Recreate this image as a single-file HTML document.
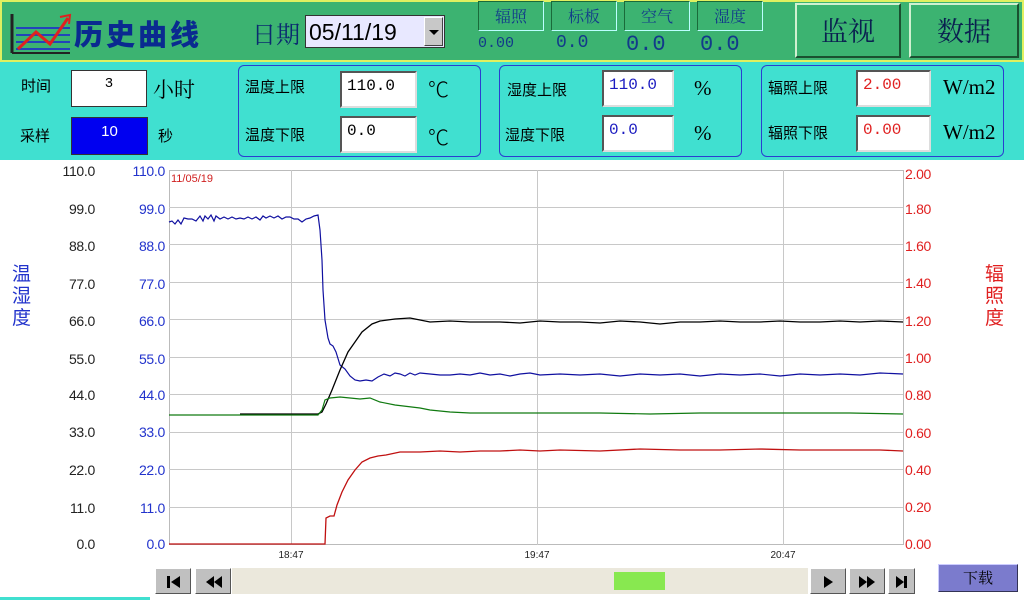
<!DOCTYPE html>
<html><head><meta charset="utf-8"><style>
*{margin:0;padding:0;box-sizing:border-box}
body{width:1024px;height:600px;overflow:hidden;background:#fff;font-family:"Liberation Sans","Noto Sans CJK SC",sans-serif;position:relative}
.a{position:absolute}
.cj{font-family:"Noto Sans CJK SC","WenQuanYi Zen Hei",sans-serif}
.sf{font-family:"Noto Serif CJK SC","Liberation Serif",serif}
.top{left:0;top:0;width:1024px;height:62px;background:#3cb371;border:2px solid #e0f060}
.band{left:0;top:62px;width:1024px;height:98px;background:#40e0d0}
.inp{background:#fff;border:2px solid;border-color:#555 #ddd #ddd #555;font-family:"Liberation Mono","Noto Sans CJK SC",monospace;font-size:16px;padding-left:5px;line-height:26px}
.grp{border:1.5px solid #2a3fd0;border-radius:6px}
.tab{border:1px solid;border-color:#1a6a3a #bff #bff #1a6a3a;width:66px;height:30px;text-align:center;font-size:16px;color:#123a8a;line-height:28px}
.bt{border:2px solid;border-color:#d0f0d0 #1a5030 #1a5030 #d0f0d0;background:#3cb371;font-size:27px;color:#0a2050;text-align:center;line-height:50px}
.sb{background:#c0c0c0;border:1px solid;border-color:#fff #555 #555 #fff;width:36px;height:26px;top:568px}
.deg{font-size:21px;font-family:"Noto Sans CJK SC",sans-serif;font-weight:300}
</style></head><body>
<div class="a top"></div>
<svg class="a" style="left:10px;top:12px" width="62" height="42"><line x1="2" y1="2" x2="2" y2="41" stroke="#222" stroke-width="3"/><g stroke="#2244bb" stroke-width="2"><line x1="6" y1="16" x2="60" y2="16"/><line x1="6" y1="23" x2="60" y2="23"/><line x1="6" y1="30" x2="60" y2="30"/><line x1="6" y1="37" x2="60" y2="37"/></g><line x1="2" y1="41" x2="60" y2="41" stroke="#222" stroke-width="2"/><polyline points="8,37 26,20 40,32 58,6" fill="none" stroke="#e02020" stroke-width="3"/><polyline points="50,5 60,3 59,12" fill="none" stroke="#e02020" stroke-width="2"/></svg>
<div class="a cj" style="left:74px;top:12px;font-size:29px;font-weight:900;color:#0a2a90;letter-spacing:3px">历史曲线</div>
<div class="a sf" style="left:252px;top:15px;font-size:24px;color:#0a2a70">日期</div>
<div class="a" style="left:305px;top:15px;width:140px;height:33px;background:#e8e8ff;border:1px solid #333;font-size:23px;line-height:32px;padding-left:3px">05/11/19</div>
<div class="a" style="left:424px;top:17px;width:19px;height:29px;background:#c8c8c8;border:1px solid;border-color:#fff #444 #444 #fff"><div class="a" style="left:4px;top:12px;border-left:5px solid transparent;border-right:5px solid transparent;border-top:5px solid #000"></div></div>
<div class="a tab sf" style="left:478px;top:1px">辐照</div>
<div class="a tab sf" style="left:551px;top:1px">标板</div>
<div class="a tab sf" style="left:624px;top:1px">空气</div>
<div class="a tab sf" style="left:697px;top:1px">湿度</div>
<div class="a" style="left:478px;top:35px;font-family:'Liberation Mono',monospace;font-size:15px;color:#123a8a">0.00</div>
<div class="a" style="left:556px;top:33px;font-family:'Liberation Mono',monospace;font-size:18px;color:#123a8a">0.0</div>
<div class="a" style="left:626px;top:32px;font-family:'Liberation Mono',monospace;font-size:22px;color:#123a8a">0.0</div>
<div class="a" style="left:700px;top:32px;font-family:'Liberation Mono',monospace;font-size:22px;color:#123a8a">0.0</div>
<div class="a bt sf" style="left:795px;top:3px;width:106px;height:55px">监视</div>
<div class="a bt sf" style="left:909px;top:3px;width:110px;height:55px">数据</div>
<div class="a band"></div>
<div class="a cj" style="left:21px;top:75px;font-size:15px">时间</div>
<div class="a inp" style="left:71px;top:70px;width:76px;height:37px;border:1px solid #333;text-align:center;padding:0;font-size:14px">3</div>
<div class="a sf" style="left:153px;top:74px;font-size:21px">小时</div>
<div class="a cj" style="left:20px;top:125px;font-size:15px">采样</div>
<div class="a" style="left:71px;top:117px;width:77px;height:38px;background:#0000f0;border:1px solid #333;color:#fff;text-align:center;font-size:15px;line-height:28px">10</div>
<div class="a cj" style="left:158px;top:125px;font-size:15px">秒</div>
<div class="a grp" style="left:238px;top:65px;width:243px;height:92px"></div>
<div class="a cj" style="left:245px;top:76px;font-size:15px">温度上限</div>
<div class="a inp" style="left:340px;top:71px;width:77px;height:37px">110.0</div>
<div class="a deg" style="left:428px;top:74px">℃</div>
<div class="a cj" style="left:245px;top:124px;font-size:15px">温度下限</div>
<div class="a inp" style="left:340px;top:116px;width:77px;height:37px">0.0</div>
<div class="a deg" style="left:428px;top:122px">℃</div>
<div class="a grp" style="left:499px;top:65px;width:243px;height:92px"></div>
<div class="a cj" style="left:507px;top:79px;font-size:15px">湿度上限</div>
<div class="a inp" style="left:602px;top:70px;width:72px;height:37px;color:#1a1ac0">110.0</div>
<div class="a" style="left:694px;top:76px;font-size:21px;font-family:'Liberation Serif',serif">%</div>
<div class="a cj" style="left:505px;top:124px;font-size:15px">湿度下限</div>
<div class="a inp" style="left:602px;top:115px;width:72px;height:37px;color:#1a1ac0">0.0</div>
<div class="a" style="left:694px;top:121px;font-size:21px;font-family:'Liberation Serif',serif">%</div>
<div class="a grp" style="left:761px;top:65px;width:243px;height:92px"></div>
<div class="a cj" style="left:768px;top:77px;font-size:15px">辐照上限</div>
<div class="a inp" style="left:856px;top:70px;width:75px;height:37px;color:#e02020">2.00</div>
<div class="a" style="left:943px;top:75px;font-size:21px;font-family:'Liberation Serif',serif">W/m2</div>
<div class="a cj" style="left:768px;top:122px;font-size:15px">辐照下限</div>
<div class="a inp" style="left:856px;top:115px;width:75px;height:37px;color:#e02020">0.00</div>
<div class="a" style="left:943px;top:120px;font-size:21px;font-family:'Liberation Serif',serif">W/m2</div>
<div class="a cj" style="left:12px;top:262px;font-size:19px;color:#2233cc;line-height:22px;width:22px">温湿度</div>
<div class="a cj" style="left:985px;top:262px;font-size:19px;color:#e02020;line-height:22px;width:22px">辐照度</div>
<svg class="a" style="left:0;top:160px" width="1024" height="440" font-family="Liberation Sans, sans-serif" font-size="14">
<g transform="translate(0,-160)">
<rect x="169.5" y="170.5" width="734" height="374" fill="#fff" stroke="#bbb"/>
<g stroke="#c8c8c8">
<line x1="169" y1="207.5" x2="903" y2="207.5"/><line x1="169" y1="244.5" x2="903" y2="244.5"/><line x1="169" y1="282.5" x2="903" y2="282.5"/><line x1="169" y1="319.5" x2="903" y2="319.5"/><line x1="169" y1="357.5" x2="903" y2="357.5"/><line x1="169" y1="394.5" x2="903" y2="394.5"/><line x1="169" y1="432.5" x2="903" y2="432.5"/><line x1="169" y1="469.5" x2="903" y2="469.5"/><line x1="169" y1="507.5" x2="903" y2="507.5"/>
<line x1="291.5" y1="170" x2="291.5" y2="545"/><line x1="537.5" y1="170" x2="537.5" y2="545"/><line x1="783.5" y1="170" x2="783.5" y2="545"/>
</g>
<text x="171" y="182" font-size="11" fill="#d02020">11/05/19</text>
<g text-anchor="end" fill="#222" font-size="14" letter-spacing="-0.3"><text x="95" y="176">110.0</text><text x="95" y="214">99.0</text><text x="95" y="251">88.0</text><text x="95" y="289">77.0</text><text x="95" y="326">66.0</text><text x="95" y="364">55.0</text><text x="95" y="400">44.0</text><text x="95" y="437">33.0</text><text x="95" y="475">22.0</text><text x="95" y="513">11.0</text><text x="95" y="549">0.0</text></g>
<g text-anchor="end" fill="#2233cc" letter-spacing="-0.3"><text x="165" y="176">110.0</text><text x="165" y="214">99.0</text><text x="165" y="251">88.0</text><text x="165" y="289">77.0</text><text x="165" y="326">66.0</text><text x="165" y="364">55.0</text><text x="165" y="400">44.0</text><text x="165" y="437">33.0</text><text x="165" y="475">22.0</text><text x="165" y="513">11.0</text><text x="165" y="549">0.0</text></g>
<g fill="#e02020" letter-spacing="-0.3"><text x="905" y="179">2.00</text><text x="905" y="214">1.80</text><text x="905" y="251">1.60</text><text x="905" y="288">1.40</text><text x="905" y="326">1.20</text><text x="905" y="363">1.00</text><text x="905" y="400">0.80</text><text x="905" y="438">0.60</text><text x="905" y="475">0.40</text><text x="905" y="512">0.20</text><text x="905" y="549">0.00</text></g>
<g font-size="10" text-anchor="middle" fill="#222"><text x="291" y="558">18:47</text><text x="537" y="558">19:47</text><text x="783" y="558">20:47</text></g>
<polyline fill="none" stroke="#1010a0" stroke-width="1.2" points="169,222 172,221 175,224 178,220 181,224 184,218 188,219 192,219 196,221 200,216 203,221 205,216 208,219 211,215 214,221 216,216 220,219 224,217 228,219 232,217 236,219 240,218 244,219 248,217 252,219 256,217 260,220 263,216 266,218 270,216 274,218 278,216 282,219 286,217 290,217 294,219 298,219 302,222 306,219 310,218 314,216 318,215 320,230 322,260 323,290 325,320 328,338 330,344 333,346 336,352 340,365 345,369 350,376 355,380 360,381 366,380 372,381 378,377 384,374 390,376 395,373 400,374 405,376 410,373 415,375 420,373 430,374 440,375 450,375 460,374 470,375 480,373 490,375 500,374 510,376 520,374 530,373 540,375 560,374 580,375 600,374 620,376 640,374 660,375 680,374 700,376 720,374 740,375 760,374 780,376 800,374 820,375 840,374 860,375 880,373 903,374"/>
<polyline fill="none" stroke="#000" stroke-width="1.3" points="240,414 318,414 322,412 326,404 332,390 340,370 348,352 355,342 362,332 372,324 380,321 395,319 410,318 420,320 430,322 450,321 470,322 500,322 520,323 540,321 560,322 580,322 600,323 620,321 640,322 660,324 680,322 700,322 720,321 740,322 760,322 780,321 800,322 820,322 840,321 860,322 880,321 903,322"/>
<polyline fill="none" stroke="#107a10" stroke-width="1.2" points="169,415 318,415 322,410 325,400 330,398 340,397 350,398 360,399 370,398 380,402 395,405 420,408 430,410 450,412 470,413 500,413 550,413 600,413 650,414 700,413 750,413 800,413 850,413 903,414"/>
<polyline fill="none" stroke="#c01010" stroke-width="1.3" points="169,544 325,544 326,518 330,516 334,516 337,505 342,492 348,480 355,470 362,462 370,458 378,456 386,455 400,452 420,452 440,451 460,452 480,451 500,451 520,450 540,451 560,450 600,451 640,449 680,450 720,450 760,449 800,450 840,450 880,450 903,451"/>
</g></svg>
<div class="a" style="left:232px;top:568px;width:576px;height:26px;background:#ebe8dc"></div>
<div class="a" style="left:614px;top:572px;width:51px;height:18px;background:#88e850"></div>
<div class="a sb" style="left:155px"><svg width="36" height="26"><rect x="11" y="7" width="3" height="12"/><polygon points="24,7 24,19 15,13"/></svg></div>
<div class="a sb" style="left:195px"><svg width="36" height="26"><polygon points="18,7 18,19 10,13"/><polygon points="26,7 26,19 18,13"/></svg></div>
<div class="a sb" style="left:810px"><svg width="36" height="26"><polygon points="13,7 13,19 22,13"/></svg></div>
<div class="a sb" style="left:849px"><svg width="36" height="26"><polygon points="9,7 9,19 17,13"/><polygon points="17,7 17,19 25,13"/></svg></div>
<div class="a sb" style="left:888px;width:27px"><svg width="27" height="26"><polygon points="7,7 7,19 15,13"/><rect x="15" y="7" width="3" height="12"/></svg></div>
<div class="a sf" style="left:938px;top:564px;width:80px;height:28px;background:#7b7bcd;border:1px solid;border-color:#ccf #335 #335 #ccf;text-align:center;font-size:15px;line-height:26px">下载</div>
<div class="a" style="left:0;top:597px;width:150px;height:3px;background:#40e0d0"></div>
</body></html>
